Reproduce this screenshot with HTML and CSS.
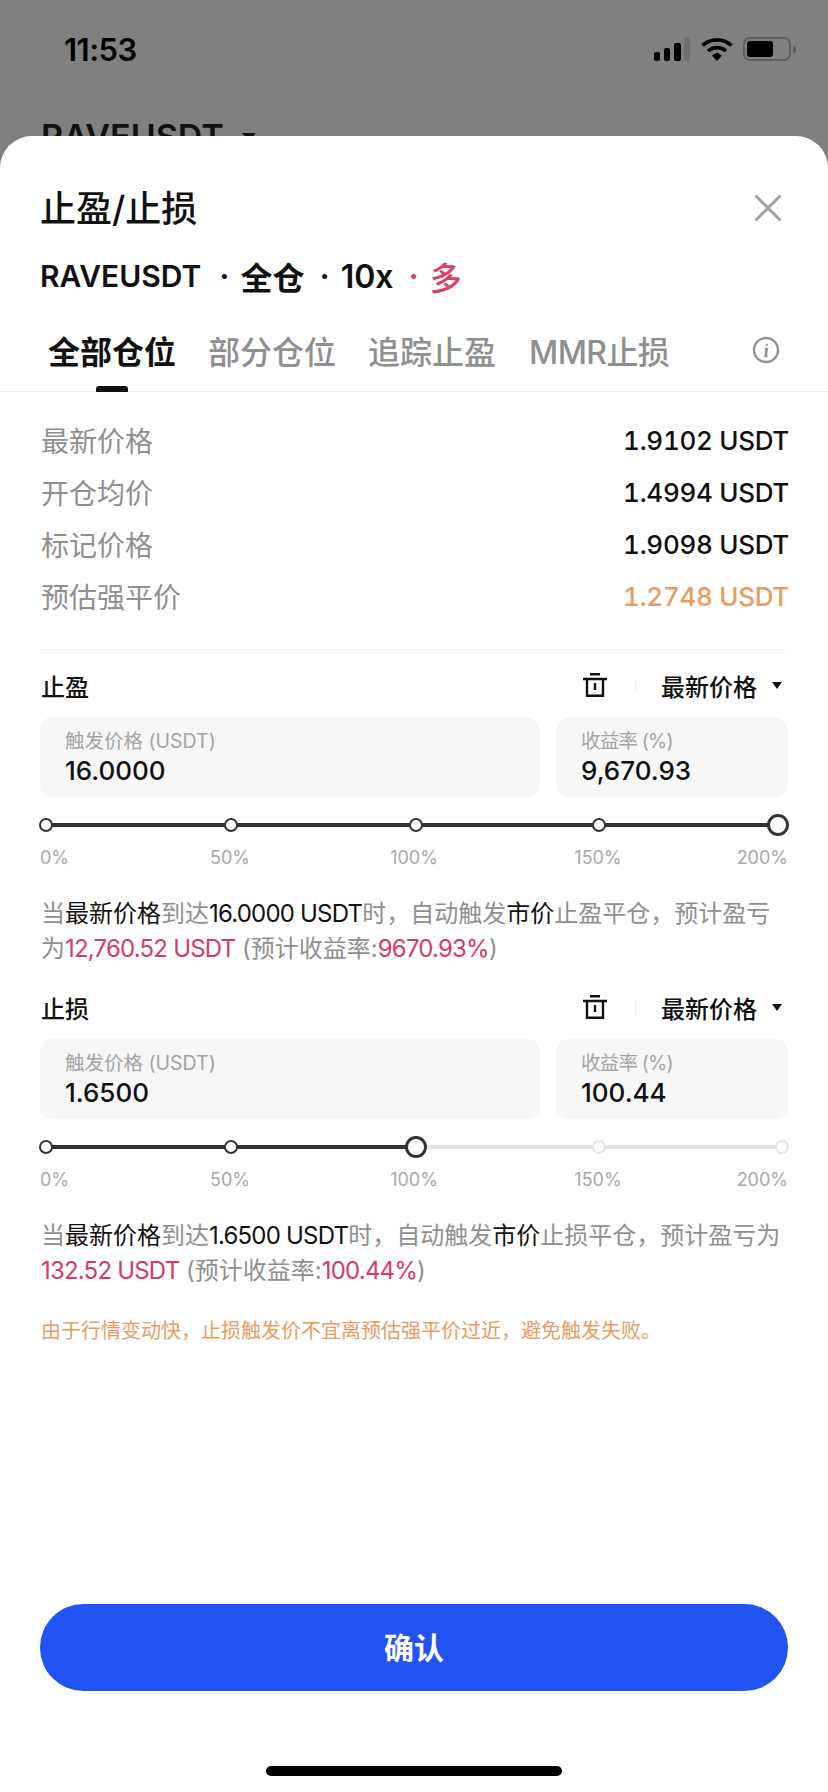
FILE: index.html
```html
<!DOCTYPE html>
<html lang="zh-CN">
    <head>
        <meta charset="UTF-8">
        <meta name="viewport" content="width=device-width, initial-scale=1.0">
        <title>止盈/止损</title>
        <link rel="stylesheet" href="styles.css">
    </head>
    <body>
        <div class="screen">
            <header class="backdrop">
                <div class="status-bar">
                    <span class="time">11:53</span>
                    <div class="status-icons">
                        <svg class="signal" width="36" height="24" viewBox="0 0 36 24">
                            <rect x="0" y="15" width="6" height="9" rx="2"/>
                            <rect x="10" y="11" width="6" height="13" rx="2"/>
                            <rect x="20" y="6" width="7" height="18" rx="2"/>
                            <rect x="30" y="0" width="6" height="24" rx="2" fill="#6f6f6f"/>
                        </svg>
                        <svg class="wifi" width="32" height="24" viewBox="0 0 32 24" fill="none" stroke="#000" stroke-width="3.6">
                            <path d="M1.5 8.5C9.5 1 22.500 1 30.500 8.500"/>
                            <path d="M7 14C12 9.500 20 9.500 25 14"/>
                            <path d="M11 18.500L16 15.500L21 18.500L16 24Z" fill="#000" stroke="none"/>
                        </svg>
                        <div class="battery"><div class="battery-fill"></div></div>
                        <div class="battery-nub"></div>
                    </div>
                </div>
                <div class="peek">
                    <span class="peek-name">RAVEUSDT</span>
                    <span class="caret peek-caret"></span>
                </div>
            </header>

            <main class="sheet">
                <div class="title-row">
                    <h1>止盈/止损</h1>
                    <svg width="28" height="28" viewBox="0 0 28 28" fill="none" stroke="#a0a0a0" stroke-width="3">
                        <path d="M1.500 1.500L26.500 26.500M26.500 1.500L1.500 26.500"/>
                    </svg>
                </div>
                <div class="position">
                    <span class="symbol">RAVEUSDT</span>
                    <span class="dot">·</span><span>全仓</span>
                    <span class="dot">·</span><span>10x</span>
                    <span class="dot red">·</span><span class="red side">多</span>
                </div>

                <nav class="tabs">
                    <a class="tab active">全部仓位</a>
                    <a class="tab">部分仓位</a>
                    <a class="tab">追踪止盈</a>
                    <a class="tab tab-mmr">MMR止损</a>
                    <svg class="info" width="28" height="28" viewBox="0 0 28 28" fill="none" stroke="#8f8f8f" stroke-width="2.400">
                        <circle cx="14" cy="14" r="12"/>
                        <path d="M14.800 8.200V9.800M13 13H14.800L13.600 20H15.400"/>
                    </svg>
                </nav>

                <div class="prices">
                    <div class="price-row"><span>最新价格</span><b>1.9102 USDT</b></div>
                    <div class="price-row"><span>开仓均价</span><b>1.4994 USDT</b></div>
                    <div class="price-row"><span>标记价格</span><b>1.9098 USDT</b></div>
                    <div class="price-row"><span>预估强平价</span><b class="orange">1.2748 USDT</b></div>
                </div>
                <div class="divider"></div>

                <section class="order">
                    <div class="order-head">
                        <span>止盈</span>
                        <div class="order-tools">
                            <svg width="24" height="24" viewBox="0 0 24 24" fill="none" stroke="#111" stroke-width="2.400">
                                <path d="M7 1.200H17M0 6H24M4 6V22.800H20V6M12 10V17"/>
                            </svg>
                            <span class="tool-sep"></span>
                            <span class="trigger-type">最新价格</span>
                            <span class="caret"></span>
                        </div>
                    </div>
                    <div class="inputs">
                        <div class="field field-price">
                            <label>触发价格 (USDT)</label>
                            <div class="field-value">16.0000</div>
                        </div>
                        <div class="field field-rate">
                            <label>收益率 (%)</label>
                            <div class="field-value">9,670.93</div>
                        </div>
                    </div>
                    <div class="slider">
                        <div class="track track-full"></div>
                        <span class="knob at-0"></span>
                        <span class="knob at-50"></span>
                        <span class="knob at-100"></span>
                        <span class="knob at-150"></span>
                        <span class="knob big at-200"></span>
                    </div>
                    <div class="ticks">
                        <span>0%</span><span>50%</span><span>100%</span><span>150%</span><span>200%</span>
                    </div>
                    <p class="desc">当<b>最新价格</b>到达<b class="num">16.0000 USDT</b>时，自动触发<b>市价</b>止盈平仓，预计盈亏为<em>12,760.52 USDT</em> (预计收益率:<em>9670.93%</em>)</p>
                </section>

                <section class="order">
                    <div class="order-head">
                        <span>止损</span>
                        <div class="order-tools">
                            <svg width="24" height="24" viewBox="0 0 24 24" fill="none" stroke="#111" stroke-width="2.400">
                                <path d="M7 1.200H17M0 6H24M4 6V22.800H20V6M12 10V17"/>
                            </svg>
                            <span class="tool-sep"></span>
                            <span class="trigger-type">最新价格</span>
                            <span class="caret"></span>
                        </div>
                    </div>
                    <div class="inputs">
                        <div class="field field-price">
                            <label>触发价格 (USDT)</label>
                            <div class="field-value">1.6500</div>
                        </div>
                        <div class="field field-rate">
                            <label>收益率 (%)</label>
                            <div class="field-value">100.44</div>
                        </div>
                    </div>
                    <div class="slider">
                        <div class="track track-half"></div>
                        <span class="knob at-0"></span>
                        <span class="knob at-50"></span>
                        <span class="knob big at-100"></span>
                        <span class="knob off at-150"></span>
                        <span class="knob off at-200-small"></span>
                    </div>
                    <div class="ticks">
                        <span>0%</span><span>50%</span><span>100%</span><span>150%</span><span>200%</span>
                    </div>
                    <p class="desc">当<b>最新价格</b>到达<b class="num">1.6500 USDT</b>时，自动触发<b>市价</b>止损平仓，预计盈亏为<em>132.52 USDT</em> (预计收益率:<em>100.44%</em>)</p>
                </section>

                <p class="warning">由于行情变动快，止损触发价不宜离预估强平价过近，避免触发失败。</p>

                <button class="confirm" type="button">确认</button>
                <div class="home-area"><div class="home-bar"></div></div>
            </main>
        </div>
    </body>
</html>
```

FILE: styles.css
```css
* {
    box-sizing: border-box;
}

html, body {
    margin: 0;
    padding: 0;
}

body {
    font-family: Inter, "Noto Sans CJK SC", sans-serif;
    color: #111;
    background-color: #808080;
}

.screen {
    width: 828px;
    height: 1792px;
    display: flex;
    flex-direction: column;
    overflow: hidden;
}

/* dimmed page behind the sheet */
.backdrop {
    height: 136px;
    overflow: hidden;
    flex-shrink: 0;
}

.status-bar {
    height: 98px;
    display: flex;
    justify-content: space-between;
    align-items: center;
    padding: 0 32px 0 64px;
}

.time {
    font-size: 31px;
    font-weight: 600;
    color: #000;
    letter-spacing: -0.5px;
}

.status-icons {
    display: flex;
    align-items: center;
}

.signal {
    margin-right: 11px;
}

.wifi {
    margin-right: 10px;
}

.battery {
    width: 48px;
    height: 24px;
    border: 2px solid #5f5f5f;
    border-radius: 7px;
    padding: 2px;
}

.battery-fill {
    width: 26px;
    height: 100%;
    background-color: #000;
    border-radius: 3px;
}

.battery-nub {
    width: 3px;
    height: 7px;
    margin-left: 2px;
    background-color: #5f5f5f;
    border-radius: 0 2px 2px 0;
}

.peek {
    display: flex;
    align-items: center;
    padding: 17px 0 0 41px;
    height: 60px;
    color: #111;
}

.peek-name {
    font-size: 34px;
    font-weight: 600;
}

.caret {
    width: 0;
    height: 0;
    border-left: 5px solid transparent;
    border-right: 5px solid transparent;
    border-top: 7px solid #111;
}

.peek-caret {
    margin-left: 18px;
    border-left-width: 7px;
    border-right-width: 7px;
    border-top-width: 8px;
}

.sheet {
    flex: 1;
    display: flex;
    flex-direction: column;
    background-color: #fff;
    border-radius: 32px 32px 0 0;
    padding-top: 48px;
}

.title-row {
    height: 48px;
    display: flex;
    justify-content: space-between;
    align-items: center;
    padding: 0 46px 0 40px;
}

h1 {
    margin: 0 0 4px;
    font-size: 36px;
    font-weight: 500;
}

.position {
    height: 44px;
    margin-top: 22px;
    padding: 0 40px;
    display: flex;
    align-items: center;
    font-size: 32px;
    font-weight: 600;
}

.symbol {
    margin-right: 18px;
    font-size: 30px;
}

.dot {
    margin-right: 11px;
}

.position span + .dot {
    margin-left: 15px;
}

.position .symbol + .dot {
    margin-left: 0;
}

.red {
    color: #dc4067;
}

.side {
    font-weight: 500;
}

.orange {
    color: #e89c5f;
}

.tabs {
    height: 80px;
    margin-top: 14px;
    padding: 0 48px 4px 48px;
    display: flex;
    align-items: center;
    gap: 32px;
    border-bottom: 1px solid #eee;
    position: relative;
}

.tab {
    font-size: 32px;
    font-weight: 500;
    color: #8f8f8f;
    white-space: nowrap;
}

.tab-mmr {
    margin-left: 1px;
    letter-spacing: -0.6px;
}

.tab.active {
    color: #111;
    font-weight: 600;
}

.tab.active::after {
    content: "";
    position: absolute;
    left: 96px;
    bottom: -1px;
    width: 32px;
    height: 6px;
    border-radius: 3px 3px 0 0;
    background-color: #111;
}

.info {
    margin-left: auto;
}

.prices {
    margin-top: 22px;
    padding: 0 39px 0 41px;
}

.price-row {
    height: 52px;
    display: flex;
    justify-content: space-between;
    align-items: center;
    font-size: 28px;
    color: #8f8f8f;
}

.price-row b {
    font-size: 26px;
    font-weight: 500;
    color: #111;
    font-variant-numeric: tabular-nums;
    letter-spacing: -0.3px;
}

.price-row b.orange {
    color: #e89c5f;
}

.divider {
    height: 1px;
    margin: 27px 41px 11px;
    background-color: #f2f2f2;
}

.order {
    padding: 0 40px;
    margin-bottom: 17px;
}

.order-head {
    height: 48px;
    display: flex;
    justify-content: space-between;
    align-items: center;
    padding-left: 1px;
    font-size: 24px;
    font-weight: 500;
}

.order-tools {
    display: flex;
    align-items: center;
    padding-right: 6px;
}

.tool-sep {
    width: 1px;
    height: 15px;
    margin: 0 25px 0 28px;
    background-color: #efefef;
}

.trigger-type {
    margin-right: 15px;
}

.inputs {
    margin-top: 8px;
    display: flex;
    gap: 16px;
}

.field {
    height: 80px;
    padding: 11px 25px 0;
    border-radius: 12px;
    background-color: #f7f7f7;
}

.field-price {
    width: 500px;
}

.field-rate {
    flex: 1;
}

.field label {
    display: block;
    height: 26px;
    line-height: 26px;
    font-size: 19.5px;
    color: #a3a3a3;
}

.field-rate label {
    letter-spacing: -0.8px;
}

.field-value {
    height: 34px;
    line-height: 34px;
    font-size: 26px;
    font-weight: 500;
    color: #111;
}

/* knobs sit on top of the track */
.slider {
    height: 22px;
    margin-top: 17px;
    position: relative;
}

.track {
    position: absolute;
    left: 0;
    right: 0;
    top: 9px;
    height: 4px;
    border-radius: 2px;
}

.track-full {
    background-color: #333;
}

.track-half {
    background: linear-gradient(to right, #333 50%, #e4e4e4 50%);
}

.knob {
    position: absolute;
    top: 4px;
    width: 14px;
    height: 14px;
    margin-left: -7px;
    border: 2px solid #333;
    border-radius: 50%;
    background-color: #fff;
}

.knob.big {
    top: 0;
    width: 22px;
    height: 22px;
    margin-left: -11px;
    border-width: 3px;
}

.knob.off {
    border-color: #e4e4e4;
}

.at-0 { left: 6px; }
.at-50 { left: 191px; }
.at-100 { left: 376px; }
.at-150 { left: 559px; }
.at-200 { left: 738px; }
.at-200-small { left: 742px; }

.ticks {
    margin-top: 10px;
    height: 24px;
    display: flex;
    justify-content: space-between;
    font-size: 18px;
    line-height: 24px;
    color: #a8a8a8;
}

.ticks span {
    width: 12px;
    display: flex;
    justify-content: center;
    white-space: nowrap;
}

.ticks span:first-child {
    justify-content: flex-start;
}

.ticks span:last-child {
    justify-content: flex-end;
}

.desc {
    margin: 26px 0 0 1px;
    font-size: 24px;
    line-height: 35px;
    color: #8f8f8f;
}

.desc b {
    font-weight: 400;
    color: #111;
}

.desc .num,
.desc em {
    letter-spacing: -0.8px;
}

.desc em {
    font-style: normal;
    color: #d83a63;
}

.warning {
    margin: 12px 40px 0 41px;
    font-size: 20px;
    line-height: 28px;
    color: #e89c5f;
}

.confirm {
    height: 87px;
    margin: auto 40px 0;
    padding: 0 0 4px;
    border: none;
    border-radius: 44px;
    background-color: #2254f4;
    color: #fff;
    font-family: inherit;
    font-size: 30px;
    font-weight: 600;
}

.home-area {
    height: 101px;
    padding-top: 75px;
    display: flex;
    justify-content: center;
}

.home-bar {
    width: 296px;
    height: 10px;
    border-radius: 5px;
    background-color: #000;
}
```
